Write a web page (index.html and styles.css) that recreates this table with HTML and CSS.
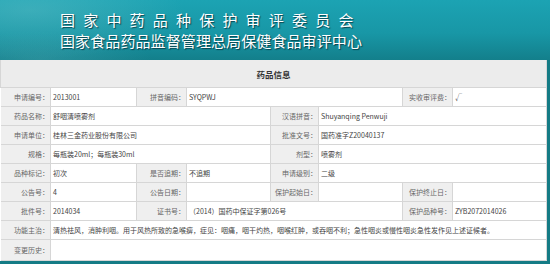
FILE: index.html
```html
<!DOCTYPE html>
<html lang="zh-CN">
<head>
<meta charset="utf-8">
<title>药品信息</title>
<link rel="stylesheet" href="styles.css">
</head>
<body>
<div class="page">
  <header class="banner">
    <div class="banner-text">
      <div class="line1">国家中药品种保护审评委员会</div>
      <div class="line2">国家食品药品监督管理总局保健食品审评中心</div>
    </div>
  </header>
  <div class="frame">
    <table class="info">
      <colgroup>
        <col class="c1"><col class="c2"><col class="c3"><col class="c4"><col class="c5"><col class="c6"><col class="c7"><col class="c8">
      </colgroup>
      <tr class="title-row"><th colspan="8">药品信息</th></tr>
      <tr>
        <td class="lb">申请编号：</td><td>2013001</td>
        <td class="lb">拼音编码：</td><td colspan="3">SYQPWJ</td>
        <td class="lb">实收审评费：</td><td>√</td>
      </tr>
      <tr>
        <td class="lb">药品名称：</td><td colspan="3">舒咽清喷雾剂</td>
        <td class="lb">汉语拼音：</td><td colspan="3">Shuyanqing Penwuji</td>
      </tr>
      <tr>
        <td class="lb">申请单位：</td><td colspan="3">桂林三金药业股份有限公司</td>
        <td class="lb">批准文号：</td><td colspan="3">国药准字Z20040137</td>
      </tr>
      <tr>
        <td class="lb">规格：</td><td colspan="3">每瓶装20ml；每瓶装30ml</td>
        <td class="lb">剂型：</td><td colspan="3">喷雾剂</td>
      </tr>
      <tr>
        <td class="lb">品种标记：</td><td>初次</td>
        <td class="lb">是否追期：</td><td>不追期</td>
        <td class="lb">申请级别：</td><td colspan="3">二级</td>
      </tr>
      <tr>
        <td class="lb">公告号：</td><td>4</td>
        <td class="lb">公告日期：</td><td></td>
        <td class="lb">保护起始日：</td><td></td>
        <td class="lb">保护终止日：</td><td></td>
      </tr>
      <tr>
        <td class="lb">批件号：</td><td>2014034</td>
        <td class="lb">证书号：</td><td colspan="3">（2014）国药中保证字第026号</td>
        <td class="lb">保护品种号：</td><td>ZYB2072014026</td>
      </tr>
      <tr>
        <td class="lb">功能主治：</td><td colspan="7">清热祛风，消肿利咽。用于风热所致的急喉痹，症见：咽痛，咽干灼热，咽喉红肿，或吞咽不利；急性咽炎或慢性咽炎急性发作见上述证候者。</td>
      </tr>
      <tr class="last">
        <td class="lb">变更历史：</td><td colspan="7"></td>
      </tr>
    </table>
  </div>
</div>
</body>
</html>
```

FILE: styles.css
```css
html, body {
  margin: 0;
  padding: 0;
  background: #ffffff;
}

.page {
  width: 550px;
  height: 264px;
  overflow: hidden;
  font-family: "Noto Sans CJK SC", "Noto Sans", sans-serif;
}

.banner {
  height: 60px;
  background:
    radial-gradient(ellipse 220px 70px at 30px 10px, rgba(120, 200, 205, 0.35), rgba(120, 200, 205, 0) 70%),
    radial-gradient(ellipse 160px 40px at 40px 60px, rgba(90, 180, 190, 0.3), rgba(90, 180, 190, 0) 70%),
    linear-gradient(to bottom, #1ca3b3 0%, #1897a6 55%, #137f8b 100%);
  box-sizing: border-box;
  padding: 9px 0 0 60px;
}

.banner-text {
  color: #ffffff;
  text-shadow: 1px 1px 1px rgba(0, 40, 50, 0.75);
  font-size: 15px;
  line-height: 21px;
}

.line1 {
  letter-spacing: 8.2px;
}

.line2 {
  letter-spacing: 0.1px;
}

.frame {
  width: 550px;
  height: 204px;
  box-sizing: border-box;
  background: #147b85;
  padding: 0 4px 2px 0;
}

.info {
  width: 546px;
  table-layout: fixed;
  border-collapse: collapse;
  background: #ffffff;
  font-size: 7px;
  color: #444444;
}

.c1 { width: 50px; }
.c2 { width: 86px; }
.c3 { width: 50px; }
.c4 { width: 84px; }
.c5 { width: 48px; }
.c6 { width: 84px; }
.c7 { width: 50px; }
.c8 { width: 94px; }

.info td, .info th {
  border: 1px solid #d6d6d6;
  height: 18px;
  padding: 0 0 0 2px;
  white-space: nowrap;
  overflow: hidden;
  line-height: 10px;
}

.info tr:first-child th {
  border-top: none;
}

.info td:first-child {
  border-left: none;
}

.title-row th {
  height: 27px;
  background: #ececec;
  font-size: 8.5px;
  font-weight: bold;
  color: #333333;
  text-align: center;
  padding: 0;
}

.info td.lb {
  background: #efefef;
  color: #666666;
  text-align: right;
  padding: 0 1px 0 0;
}

.last td {
  height: 20px;
}
```
